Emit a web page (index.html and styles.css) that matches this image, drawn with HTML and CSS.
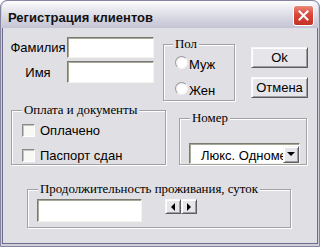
FILE: index.html
```html
<!DOCTYPE html>
<html lang="ru">
<head>
  <meta charset="UTF-8">
  <title>Регистрация клиентов</title>
  <link rel="stylesheet" href="styles.css">
</head>
<body>

  <div class="window">
    <div class="titlebar">
      <span class="title">Регистрация клиентов</span>
      <span class="close">
        <svg width="11" height="11" viewBox="0 0 11 11">
          <path d="M1.5 1.5 L9.5 9.5 M9.5 1.5 L1.5 9.5" stroke="#fff" stroke-width="2" stroke-linecap="square"/>
        </svg>
      </span>
    </div>

    <div class="client">
      <!-- ФИО, пол, кнопки -->
      <div class="row row-top">
        <div class="fields">
          <label>Фамилия</label><span class="textbox"></span>
          <label>Имя</label><span class="textbox"></span>
        </div>

        <fieldset class="group group-sex">
          <legend>Пол</legend>
          <div class="option"><span class="radio"></span>Муж</div>
          <div class="option"><span class="radio"></span>Жен</div>
        </fieldset>

        <div class="buttons">
          <button class="btn">Ok</button>
          <button class="btn">Отмена</button>
        </div>
      </div>

      <!-- Оплата и номер -->
      <div class="row row-mid">
        <fieldset class="group group-pay">
          <legend>Оплата и документы</legend>
          <div class="option"><span class="check"></span>Оплачено</div>
          <div class="option"><span class="check"></span>Паспорт сдан</div>
        </fieldset>

        <fieldset class="group group-room">
          <legend>Номер</legend>
          <div class="combo">
            <span class="combo-text">Люкс. Одноместный</span>
            <span class="arrow-btn arrow-down"><span class="tri tri-down"></span></span>
          </div>
        </fieldset>
      </div>

      <!-- Срок -->
      <fieldset class="group group-stay">
        <legend>Продолжительность проживания, суток</legend>
        <div class="stay-row">
          <span class="textbox textbox-stay"></span>
          <div class="spin">
            <span class="arrow-btn"><span class="tri tri-left"></span></span>
            <span class="arrow-btn"><span class="tri tri-right"></span></span>
          </div>
        </div>
      </fieldset>
    </div>
  </div>

</body>
</html>
```

FILE: styles.css
```css
body {
  margin: 0;
  font-family: "Liberation Sans", Arial, sans-serif;
  font-size: 13px;
  color: #000;
}

.window {
  width: 320px;
  height: 247px;
  box-sizing: border-box;
  border: 1px solid #8585a2;
  border-radius: 7px 7px 0 0;
  background: #cfcfdc;
  padding: 0 1px 2px;
  display: flex;
  flex-direction: column;
  overflow: hidden;
}

.titlebar {
  height: 27px;
  flex: none;
  display: flex;
  align-items: flex-start;
  justify-content: space-between;
  padding: 4px 4px 0 6px;
  box-sizing: border-box;
  background: linear-gradient(to bottom, #fdfdfe 0%, #ececf2 25%, #d9d9e3 60%, #c3c3d3 100%);
  border-radius: 6px 6px 0 0;
}

.title {
  margin-top: 5px;
  font-weight: bold;
  font-size: 13px;
  line-height: 15px;
  color: #111;
}

.close {
  width: 21px;
  height: 21px;
  box-sizing: border-box;
  border: 1px solid #fff;
  border-radius: 3px;
  background: linear-gradient(to bottom, #e98a7c, #d9463a 45%, #c13325);
  display: flex;
  align-items: center;
  justify-content: center;
}

.client {
  flex: 1;
  background: #e0dfe3;
  border: 1px solid #6c6c8d;
  border-top: 0;
}

.row {
  display: flex;
  align-items: flex-start;
}

.row-top {
  padding-top: 9px;
}

.fields {
  margin-left: 6px;
  display: grid;
  grid-template-columns: 58px 87px;
  grid-template-rows: 21px 22px;
  row-gap: 3px;
}

.fields label {
  display: flex;
  align-items: center;
  justify-content: center;
}

.textbox {
  display: block;
  box-sizing: border-box;
  background: #fff;
  border: 1px solid;
  border-color: #7a7a70 #f4f3ec #f4f3ec #7a7a70;
  box-shadow: inset 1px 1px 0 #a9a898;
}

/* рамки групп */
.group {
  box-sizing: border-box;
  margin: 0;
  padding: 0;
  min-width: 0;
  border: 1px solid #a2a2a6;
  box-shadow: inset 1px 1px 0 #fff, 1px 1px 0 #fff;
}

.group legend {
  font-family: "Liberation Serif", "Times New Roman", serif;
  font-size: 12.9px;
  line-height: 14px;
  padding: 0 2px;
  margin-left: 1px;
  background: #e0dfe3;
}

.option {
  display: flex;
  align-items: center;
}

.group-sex {
  margin-left: 9px;
  width: 72px;
  height: 64px;
  padding: 4px 0 0 11px;
}

.group-sex legend {
  margin-left: -2px;
}

.group-sex .option {
  height: 18px;
  margin-bottom: 8px;
}

.radio {
  width: 13px;
  height: 13px;
  box-sizing: border-box;
  border-radius: 50%;
  border: 1px solid;
  border-color: #9a9a9e #f4f4f4 #f4f4f4 #9a9a9e;
  background: radial-gradient(circle at 60% 60%, #fff 40%, #e6e6e8 100%);
  margin: 0 1px 4px 0;
}

.buttons {
  margin-left: 16px;
  margin-top: 10px;
  display: flex;
  flex-direction: column;
  gap: 9px;
}

.btn {
  width: 57px;
  height: 21px;
  padding: 0;
  font-family: "Liberation Sans", Arial, sans-serif;
  font-size: 13px;
  color: #000;
  background: #e6e5e9;
  border: 1px solid;
  border-color: #f7f7f7 #5e5e62 #5e5e62 #f7f7f7;
  box-shadow: inset 1px 1px 0 #fff, inset -1px -1px 0 #9d9da1;
}

.row-mid {
  margin-top: 2px;
}

.group-pay {
  margin-left: 8px;
  width: 155px;
  height: 62px;
  padding: 4px 0 0 10px;
}

.group-pay legend {
  margin-left: 0;
}

.group-pay .option {
  height: 18px;
  margin-bottom: 7px;
  gap: 5px;
}

.check {
  width: 13px;
  height: 13px;
  box-sizing: border-box;
  border: 1px solid;
  border-color: #8a8a8a #fff #fff #8a8a8a;
  box-shadow: inset 1px 1px 0 #c4c4c4;
  background: #f8f8f4;
}

.group-room {
  margin-left: 13px;
  margin-top: 8px;
  width: 128px;
  height: 54px;
  padding: 18px 0 0 9px;
}

.combo {
  width: 111px;
  height: 21px;
  box-sizing: border-box;
  display: flex;
  align-items: center;
  background: #fff;
  border: 1px solid;
  border-color: #7a7a70 #f4f3ec #f4f3ec #7a7a70;
  box-shadow: inset 1px 1px 0 #a9a898;
  padding: 1px 0 0 1px;
}

.combo-text {
  flex: 1;
  min-width: 0;
  overflow: hidden;
  white-space: nowrap;
  padding-left: 10px;
  padding-top: 2px;
}

.arrow-btn {
  width: 16px;
  height: 15px;
  box-sizing: border-box;
  display: flex;
  align-items: center;
  justify-content: center;
  background: #e6e5e9;
  border: 1px solid;
  border-color: #f7f7f7 #5e5e62 #5e5e62 #f7f7f7;
  box-shadow: inset 1px 1px 0 #fff, inset -1px -1px 0 #9d9da1;
}

.arrow-down {
  height: 17px;
}

.tri {
  width: 0;
  height: 0;
  border: 0 solid transparent;
}

.tri-down {
  border-width: 4px 4px 0 4px;
  border-top-color: #000;
}

.tri-left {
  border-width: 4px 4px 4px 0;
  border-right-color: #000;
}

.tri-right {
  border-width: 4px 0 4px 4px;
  border-left-color: #000;
}

.group-stay {
  margin-left: 24px;
  margin-top: 17px;
  width: 264px;
  height: 46px;
  padding: 3px 0 0 9px;
}

.stay-row {
  display: flex;
  align-items: flex-start;
}

.textbox-stay {
  width: 105px;
  height: 23px;
}

.spin {
  display: flex;
  margin-left: 23px;
}
```
